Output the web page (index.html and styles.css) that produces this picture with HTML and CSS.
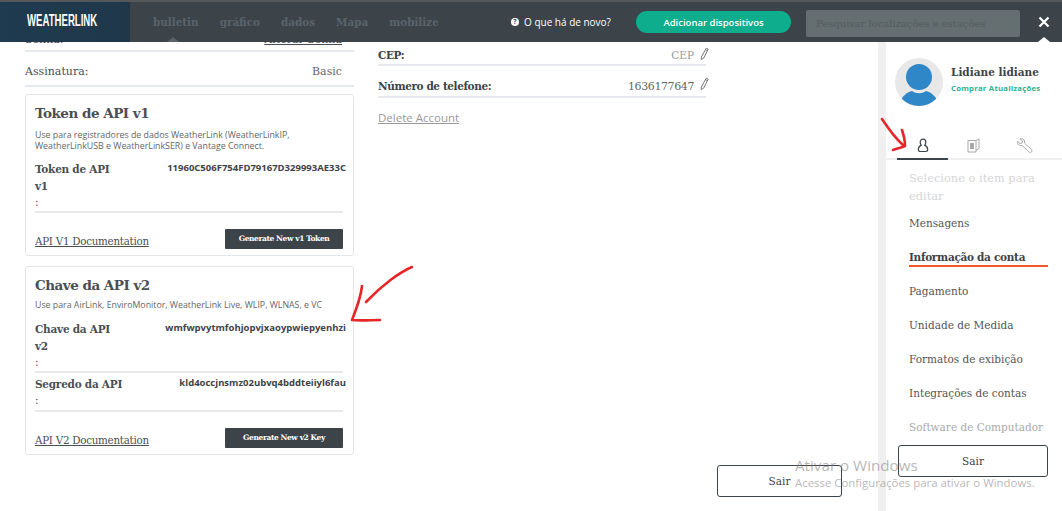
FILE: index.html
```html
<!DOCTYPE html>
<html lang="pt">
<head>
  <meta charset="UTF-8">
  <meta name="viewport" content="width=device-width, initial-scale=1.0">
  <title>WeatherLink</title>
  <link rel="stylesheet" href="styles.css">
</head>
<body>
  <header class="topbar">
    <div class="logo"><span class="logo-text">WEATHERLINK</span></div>
    <nav class="nav">
      <a class="nav-item nav-current">bulletin</a>
      <a class="nav-item">gráfico</a>
      <a class="nav-item">dados</a>
      <a class="nav-item">Mapa</a>
      <a class="nav-item">mobilize</a>
    </nav>
    <div class="whats-new"><span class="help-dot">?</span>O que há de novo?</div>
    <button class="add-btn">Adicionar dispositivos</button>
    <div class="search">Pesquisar localizações e estações</div>
    <div class="close">
      <svg width="12" height="12" viewBox="0 0 12 12"><path d="M1.500 1.500l9 9M10.500 1.500l-9 9" stroke="#fff" stroke-width="2.200" fill="none"/></svg>
    </div>
  </header>

  <div class="page">
    <main class="main">
      <section class="col-left">
        <div class="row row-clipped"><span>Senha:</span><a class="link">Alterar Senha</a></div>
        <div class="row row-plan"><span>Assinatura:</span><span class="plan">Basic</span></div>

        <div class="card card-v1">
          <h2>Token de API v1</h2>
          <p class="card-desc">Use para registradores de dados WeatherLink (WeatherLinkIP, WeatherLinkUSB e WeatherLinkSER) e Vantage Connect.</p>
          <div class="key-row">
            <div class="key-label">Token de API v1<br><span class="colon">:</span></div>
            <div class="key-value">11960C506F754FD79167D329993AE33C</div>
          </div>
          <div class="card-foot">
            <a class="link doc-link">API V1 Documentation</a>
            <button class="dark-btn">Generate New v1 Token</button>
          </div>
        </div>

        <div class="card card-v2">
          <h2>Chave da API v2</h2>
          <p class="card-desc">Use para AirLink, EnviroMonitor, WeatherLink Live, WLIP, WLNAS, e VC</p>
          <div class="key-row">
            <div class="key-label">Chave da API v2<br><span class="colon">:</span></div>
            <div class="key-value">wmfwpvytmfohjopvjxaoypwiepyenhzi</div>
          </div>
          <div class="key-row key-row-next">
            <div class="key-label key-label-wide">Segredo da API<br><span class="colon">:</span></div>
            <div class="key-value">kld4occjnsmz02ubvq4bddteiiyl6fau</div>
          </div>
          <div class="card-foot">
            <a class="link doc-link">API V2 Documentation</a>
            <button class="dark-btn">Generate New v2 Key</button>
          </div>
        </div>
      </section>

      <section class="col-mid">
        <div class="field field-first">
          <strong>CEP:</strong>
          <span class="field-value field-empty">CEP</span>
          <svg class="pencil" width="9" height="14" viewBox="0 0 9 14"><path d="M6.200 1.200l2 1-4.600 9-2.400 1.400.2-2.600zM5.400 2.600l2 1" fill="none" stroke="#777" stroke-width="1"/></svg>
        </div>
        <div class="field">
          <strong>Número de telefone:</strong>
          <span class="field-value">1636177647</span>
          <svg class="pencil" width="9" height="14" viewBox="0 0 9 14"><path d="M6.200 1.200l2 1-4.600 9-2.400 1.400.2-2.600zM5.400 2.600l2 1" fill="none" stroke="#777" stroke-width="1"/></svg>
        </div>
        <a class="delete-link">Delete Account</a>
      </section>

      <section class="col-actions">
        <button class="outline-btn">Sair</button>
      </section>
    </main>

    <aside class="side">
      <div class="profile">
        <svg class="avatar" width="48" height="48" viewBox="0 0 48 48">
          <defs><clipPath id="avatar-clip"><circle cx="24" cy="24" r="24"/></clipPath></defs>
          <circle cx="24" cy="24" r="24" fill="#e8e8e8"/>
          <g clip-path="url(#avatar-clip)">
            <circle cx="24" cy="19" r="13" fill="#2f87c8"/>
            <path d="M5 48c0-10 8-14 12-15 4 3 10 3 14 0 4 1 12 5 12 15z" fill="#2f87c8"/>
          </g>
        </svg>
        <div>
          <div class="profile-name">Lidiane lidiane</div>
          <div class="profile-upgrade">Comprar Atualizações</div>
        </div>
      </div>

      <div class="tabs">
        <div class="tab tab-active">
          <svg width="12" height="15" viewBox="0 0 12 15"><path d="M6 1.200c1.700 0 2.800 1.300 2.800 3 0 1.300-.5 2.200-1 2.900 1.600.8 2.900 2.500 2.900 4.500 0 1.200-.8 1.900-2 1.900H3.300c-1.200 0-2-.7-2-1.900 0-2 1.300-3.700 2.900-4.500-.5-.7-1-1.600-1-2.900 0-1.700 1.100-3 2.800-3z" fill="none" stroke="#3c444a" stroke-width="1.200"/></svg>
        </div>
        <div class="tab">
          <svg width="13" height="15" viewBox="0 0 13 15"><path d="M1 2.500h8v11.500H1zM9 2.500l3-1.500v9.500l-3 2" fill="none" stroke="#a8a8a8" stroke-width="1"/><rect x="3" y="5" width="4" height="6" fill="#a8a8a8"/></svg>
        </div>
        <div class="tab">
          <svg width="17" height="16" viewBox="0 0 17 16"><path d="M1.500 3.200L4 5.600l2-.6.600-2L4 .8c2-.6 4 .4 4.500 2.200.2.800.1 1.500-.1 2l7 6.400c.8.800.7 1.800.1 2.500-.7.700-1.800.8-2.600 0L6 7.400c-.7.200-1.500.2-2.200 0C2 6.800 1 5 1.500 3.200z" fill="none" stroke="#a8a8a8" stroke-width="1"/></svg>
        </div>
      </div>

      <p class="side-hint">Selecione o item para editar</p>
      <ul class="menu">
        <li>Mensagens</li>
        <li class="menu-active">Informação da conta</li>
        <li>Pagamento</li>
        <li>Unidade de Medida</li>
        <li>Formatos de exibição</li>
        <li>Integrações de contas</li>
        <li class="menu-muted">Software de Computador</li>
      </ul>
      <button class="outline-btn side-logout">Sair</button>
    </aside>
  </div>

  <!-- red marks drawn over the screenshot -->
  <svg class="marks" width="1062" height="511" viewBox="0 0 1062 511">
    <g fill="none" stroke="#e8262a" stroke-width="2.600" stroke-linecap="round" stroke-linejoin="round">
      <path d="M412 267C400 272 382 285 366 302"/>
      <path d="M362 286C361 296 356 310 352 320C360 321 371 320 380 320"/>
      <path d="M882 119C888 128 895 138 903 145"/>
      <path d="M902 130C904 136 905 141 905 146C900 148 896 149 893 150"/>
    </g>
  </svg>

  <div class="watermark">
    <div class="watermark-title">Ativar o Windows</div>
    <div class="watermark-sub">Acesse Configurações para ativar o Windows.</div>
  </div>
</body>
</html>
```

FILE: styles.css
```css
* {
  box-sizing: border-box;
}

html, body {
  height: 100%;
}

body {
  margin: 0;
  height: 511px;
  overflow: hidden;
  background-color: #fff;
  color: #4a4f54;
  font-family: "DejaVu Serif", serif;
  font-size: 11px;
}

button {
  font-family: inherit;
}

.topbar {
  display: flex;
  align-items: center;
  height: 42px;
  border-top: 2px solid #55585a;
  background-color: #3c444a;
  position: relative;
  z-index: 2;
}

.logo {
  width: 130px;
  height: 100%;
  padding-left: 27px;
  background: linear-gradient(90deg, #1f3b50, #20374a);
  line-height: 38px;
}

.logo-text {
  display: inline-block;
  color: #fff;
  font-family: "Liberation Sans", sans-serif;
  font-size: 16px;
  font-weight: bold;
  transform: scaleX(0.6);
  transform-origin: left center;
}

.nav {
  display: flex;
  gap: 21px;
  margin-left: 23px;
  width: 346px;
  height: 100%;
  align-items: center;
}

.nav-item {
  color: #5a636a;
  font-size: 10.400px;
  font-weight: bold;
  position: relative;
}

.nav-current::after {
  content: "";
  position: absolute;
  left: 14px;
  top: 21px;
  border-left: 6px solid transparent;
  border-right: 6px solid transparent;
  border-bottom: 5px solid #5a636a;
}

.whats-new {
  display: flex;
  align-items: center;
  width: 125px;
  margin-left: 12px;
  color: #fff;
  font-family: "Open Sans", sans-serif;
  font-size: 10px;
}

.help-dot {
  width: 8px;
  height: 8px;
  margin-right: 5px;
  border-radius: 50%;
  background-color: #fff;
  color: #3c444a;
  font-size: 7px;
  font-weight: bold;
  line-height: 8px;
  text-align: center;
}

.add-btn {
  width: 155px;
  height: 22px;
  border: none;
  border-radius: 11px;
  background-color: #0dad8d;
  color: #fff;
  font-family: "Open Sans", sans-serif;
  font-size: 9.500px;
  font-weight: 600;
}

.search {
  width: 214px;
  height: 27px;
  margin-left: 15px;
  margin-top: 2px;
  padding-left: 10px;
  border-radius: 2px;
  background-color: #656e70;
  color: #545c60;
  font-size: 10px;
  line-height: 27px;
  white-space: nowrap;
}

.close {
  position: relative;
  display: flex;
  flex: 1;
  justify-content: center;
  height: 100%;
  align-items: center;
  padding-left: 6px;
}

.close::after {
  content: "";
  position: absolute;
  left: 18px;
  bottom: 0;
  border-left: 6px solid transparent;
  border-right: 6px solid transparent;
  border-bottom: 5px solid #fff;
}

.page {
  display: flex;
  height: 469px;
  overflow: hidden;
}

.main {
  display: flex;
  width: 878px;
  padding-left: 25px;
}

.col-left {
  width: 329px;
  margin-right: 24px;
}

.row {
  display: flex;
  justify-content: space-between;
  padding-right: 12px;
  border-bottom: 2px solid #e6eaee;
}

.row-clipped {
  height: 10px;
  overflow: hidden;
  align-items: flex-end;
  padding-bottom: 4px;
}

.row-plan {
  height: 35px;
  align-items: center;
  padding-top: 5px;
}

.plan {
  color: #666;
}

.link {
  color: #4a4f54;
  text-decoration: underline;
}

.card {
  margin-top: 7px;
  padding: 0 9px;
  border: 1px solid #e3e6e9;
  border-radius: 3px;
}

.card-v1 {
  height: 162px;
}

.card-v2 {
  height: 189px;
  margin-top: 10px;
}

.card h2 {
  margin: 8px 0 0;
  font-size: 13.500px;
  letter-spacing: -0.5px;
  line-height: 20px;
  color: #4a4f54;
}

.card-desc {
  margin: 7px 0 9px;
  font-family: "Open Sans", sans-serif;
  font-size: 8.800px;
  line-height: 11px;
  color: #666;
}

.card-v2 .card-desc {
  margin: 5px 0 10px;
}

.key-row {
  display: flex;
  justify-content: space-between;
  width: 308px;
  margin-top: 5px;
  border-bottom: 2px solid #e6e8ea;
  position: relative;
}

.key-row-next {
  margin-top: 3px;
  padding-bottom: 1px;
}

.key-label {
  width: 82px;
  font-size: 10.500px;
  font-weight: bold;
  letter-spacing: -0.25px;
  line-height: 16.500px;
}

.key-label-wide {
  width: 110px;
}

.colon {
  font-weight: normal;
}

.key-value {
  margin-right: -3px;
  font-family: "Open Sans", sans-serif;
  font-size: 9.500px;
  font-weight: 700;
  line-height: 14px;
  color: #3e4347;
  white-space: nowrap;
}

.card-foot {
  display: flex;
  justify-content: space-between;
  align-items: center;
  width: 308px;
  margin-top: 16px;
}

.doc-link {
  font-size: 10.300px;
  letter-spacing: -0.25px;
  padding-top: 5px;
}

.dark-btn {
  width: 118px;
  height: 20px;
  border: none;
  border-radius: 1px;
  background-color: #3c444a;
  color: #fff;
  font-size: 7.500px;
  font-weight: bold;
  letter-spacing: -0.4px;
}

.col-mid {
  width: 328px;
}

.field {
  display: flex;
  align-items: center;
  height: 32px;
  position: relative;
  padding-top: 10px;
  padding-right: 12px;
  border-bottom: 2px solid #e6eaee;
}

.field-first {
  height: 24px;
  padding-top: 3px;
}

.field strong {
  flex: 1;
  color: #3e4347;
  font-size: 10.500px;
  letter-spacing: -0.4px;
}

.field-value {
  color: #666;
  letter-spacing: -0.4px;
}

.field-empty {
  color: #999;
  letter-spacing: 0;
  font-size: 10.500px;
}

.pencil {
  position: absolute;
  right: -3px;
  top: 50%;
  margin-top: -4px;
}

.field-first .pencil {
  margin-top: -6px;
}

.delete-link {
  display: block;
  margin-top: 12px;
  color: #999;
  font-family: "Open Sans", sans-serif;
  font-size: 11.500px;
  text-decoration: underline;
}

.col-actions {
  display: flex;
  align-items: flex-end;
  margin-left: 11px;
  padding-bottom: 14px;
}

.outline-btn {
  width: 125px;
  height: 32px;
  border: 1px solid #3c444a;
  border-radius: 3px;
  background-color: #fff;
  color: #3e4347;
  font-size: 10.500px;
}

.side {
  width: 184px;
  border-left: 8px solid #f0f0f0;
}

.profile {
  display: flex;
  align-items: flex-start;
  gap: 8px;
  height: 92px;
  padding: 16px 0 0 9px;
}

.profile-name {
  margin-top: 7px;
  color: #3e4347;
  font-size: 10.500px;
  font-weight: bold;
  line-height: 14px;
}

.profile-upgrade {
  margin-top: 4px;
  color: #2cb293;
  font-family: "Open Sans", sans-serif;
  font-size: 7.800px;
  font-weight: 700;
  letter-spacing: 0.2px;
}

.tabs {
  display: flex;
  padding-left: 11px;
  height: 26px;
  border-bottom: 2px solid #f0f0f0;
}

.tab {
  display: flex;
  justify-content: center;
  width: 51px;
  height: 26px;
  padding-top: 4px;
}

.tab-active {
  border-bottom: 2px solid #3c444a;
}

.side-hint {
  margin: 9px 0 0;
  padding: 0 20px 0 23px;
  color: #d6d6d6;
  font-size: 11.400px;
  line-height: 18px;
}

.menu {
  margin: 8px 0 0;
  padding: 0;
  list-style: none;
}

.menu li {
  height: 34px;
  margin-left: 23px;
  padding-top: 1px;
  color: #555;
  font-size: 10.500px;
  line-height: 18px;
  white-space: nowrap;
}

.menu .menu-active {
  position: relative;
  color: #3e4347;
  font-weight: bold;
  letter-spacing: -0.3px;
}

.menu-active::after {
  content: "";
  position: absolute;
  left: 0;
  top: 18px;
  width: 139px;
  height: 2px;
  background-color: #f2582a;
}

.menu .menu-muted {
  color: #aaa;
}

.side-logout {
  display: block;
  width: 150px;
  margin: -6px 0 0 12px;
}

.marks {
  position: absolute;
  left: 0;
  top: 0;
  z-index: 3;
  pointer-events: none;
}

.watermark {
  position: absolute;
  left: 795px;
  top: 455px;
  z-index: 4;
  color: rgba(120, 120, 120, 0.55);
  font-family: "Open Sans", sans-serif;
  white-space: nowrap;
}

.watermark-title {
  font-size: 15.200px;
  line-height: 20px;
}

.watermark-sub {
  font-size: 11.400px;
  line-height: 16px;
}
```
